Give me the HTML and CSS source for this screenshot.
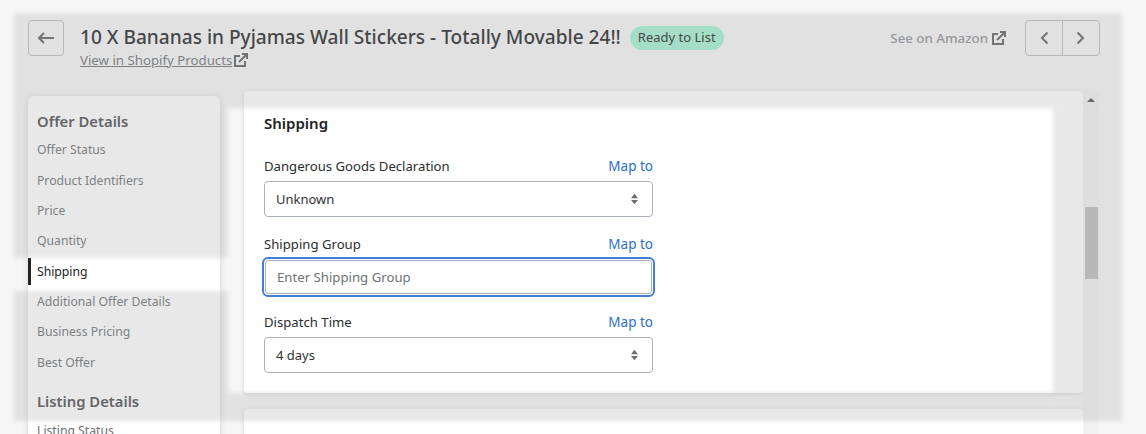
FILE: index.html
```html
<!DOCTYPE html>
<html lang="en">
<head>
<meta charset="utf-8">
<title>Shipping</title>
<link rel="stylesheet" href="styles.css">
</head>
<body>
<div class="page">
  <header class="topbar">
    <button class="btn back" aria-label="Back"><svg viewBox="0 0 20 20" width="20" height="20"><path d="M18 10H3M8 5l-5 5 5 5"/></svg></button>
    <div class="heading">
      <div class="title-row"><h1>10 X Bananas in Pyjamas Wall Stickers - Totally Movable 24!!</h1><span class="badge">Ready to List</span></div>
      <div class="link-row"><a class="shopify">View in Shopify Products</a><svg class="ext" viewBox="0 0 20 20" width="20" height="20"><path d="M11 3h6v6h-2V6.400l-6.300 6.300-1.400-1.400L13.600 5H11zM3 5h6v2H5v8h8v-4h2v6H3z"/></svg></div>
    </div>
    <a class="amazon">See on Amazon<svg class="ext" viewBox="0 0 20 20" width="20" height="20"><path d="M11 3h6v6h-2V6.400l-6.300 6.300-1.400-1.400L13.600 5H11zM3 5h6v2H5v8h8v-4h2v6H3z"/></svg></a>
    <div class="pager">
      <button class="btn" aria-label="Previous"><svg viewBox="0 0 20 20" width="20" height="20"><path d="M13.500 4.500 8 10l5.500 5.500"/></svg></button>
      <button class="btn" aria-label="Next"><svg viewBox="0 0 20 20" width="20" height="20"><path d="M6.500 4.500 12 10l-5.500 5.500"/></svg></button>
    </div>
  </header>
  <div class="body">
    <nav class="side">
      <h2>Offer Details</h2>
      <ul>
        <li>Offer Status</li>
        <li>Product Identifiers</li>
        <li>Price</li>
        <li>Quantity</li>
        <li class="active">Shipping</li>
        <li>Additional Offer Details</li>
        <li>Business Pricing</li>
        <li>Best Offer</li>
      </ul>
      <h2 class="second">Listing Details</h2>
      <ul class="listing"><li>Listing Status</li></ul>
    </nav>
    <main class="content">
      <section class="card">
        <h3>Shipping</h3>
        <div class="field">
          <div class="label-row"><label>Dangerous Goods Declaration</label><a>Map to</a></div>
          <div class="control"><span>Unknown</span><svg class="updown" viewBox="0 0 8 12" width="7" height="12"><path d="M4 0 8 5H0zM4 12 0 7h8z"/></svg></div>
        </div>
        <div class="field">
          <div class="label-row"><label>Shipping Group</label><a>Map to</a></div>
          <div class="control focus"><span>Enter Shipping Group</span></div>
        </div>
        <div class="field">
          <div class="label-row"><label>Dispatch Time</label><a>Map to</a></div>
          <div class="control"><span>4 days</span><svg class="updown" viewBox="0 0 8 12" width="7" height="12"><path d="M4 0 8 5H0zM4 12 0 7h8z"/></svg></div>
        </div>
      </section>
      <section class="card next"></section>
    </main>
    <div class="scrollbar"><i class="up"></i><i class="thumb"></i></div>
  </div>
  <div class="veil v-top"></div>
  <div class="veil v-left1"></div>
  <div class="veil v-left2"></div>
  <div class="veil v-right"></div>
  <div class="veil v-bottom"></div>
</div>
</body>
</html>
```

FILE: styles.css
```css
* { box-sizing: border-box; }
html, body { margin: 0; height: 100%; }
body { background: #f6f6f7; font-family: "Noto Sans", "Open Sans", sans-serif; color: #202223; overflow: hidden; }
.page { position: relative; width: 1146px; height: 434px; overflow: hidden; padding: 20px 46px 0 28px; }

.topbar { display: flex; align-items: flex-start; height: 71px; }
.btn { width: 36px; height: 36px; padding: 0; background: transparent; border: 1px solid #babfc3; border-radius: 4px; display: flex; align-items: center; justify-content: center; }
.btn svg { fill: none; stroke: #5c5f62; stroke-width: 2; }
.heading { margin-left: 16px; flex: 1; }
.title-row { display: flex; align-items: center; height: 29px; margin-top: 3px; }
h1 { margin: 0; font-size: 19.100px; font-weight: 500; line-height: 29px; color: #202223; white-space: nowrap; }
.badge { margin-left: 9px; height: 24px; padding: 0 8px; border-radius: 12px; background: #a4f1d3; font-size: 13px; line-height: 23px; color: #202223; }
.link-row { display: flex; align-items: center; height: 16px; }
.shopify { font-size: 13.250px; line-height: 16px; color: #6d7175; text-decoration: underline; }
.ext { fill: #5c5f62; margin-left: -1px; flex: none; }
.amazon { display: flex; align-items: center; height: 36px; font-size: 13.300px; font-weight: 500; color: #8c9196; margin-right: 16px; }
.amazon .ext { margin-left: 1px; }
.pager { display: flex; }
.pager .btn { width: 38px; }
.pager .btn:first-child { border-radius: 4px 0 0 4px; }
.pager .btn:last-child { margin-left: -1px; border-radius: 0 4px 4px 0; }

.body { display: flex; align-items: flex-start; }
.side { width: 192px; margin-top: 5px; padding: 14px 0 0; background: #fff; border-radius: 6px; box-shadow: 0 1px 6px rgba(0,0,0,.15); height: 400px; flex: none; }
.side h2 { margin: 0; padding-left: 9px; font-size: 14.800px; font-weight: 600; line-height: 22px; color: #4a4c4f; }
.side .second { margin-top: 11.600px; }
.side ul { list-style: none; margin: 3.450px 0 0; padding: 0; }
.side .listing { margin-top: 4.500px; }
.side li { padding-left: 9px; height: 30.330px; line-height: 30px; font-size: 12.200px; color: #6d7175; position: relative; }
.side li.active { color: #202223; }
.side li.active::before { content: ""; position: absolute; left: 0; top: 1px; width: 3px; height: 27px; background: #202223; }

.content { width: 839px; margin-left: 24px; flex: none; }
.card { background: #fff; border-radius: 4px; box-shadow: 0 1px 4px rgba(0,0,0,.15); padding: 20px; height: 302px; }
.card.next { margin-top: 16px; height: 120px; }
h3 { margin: 0 0 21px; font-size: 15px; font-weight: 600; line-height: 24px; color: #202223; }
.field { width: 389px; margin-bottom: 10px; height: 68px; }
.label-row { display: flex; justify-content: space-between; font-size: 13.150px; line-height: 20px; height: 25px; color: #2b2d2e; }
.label-row a { color: #2c6ecb; font-size: 13.500px; }
.control { height: 36px; border: 1px solid #a9afbb; border-radius: 4px; padding: 0 11px; display: flex; align-items: center; justify-content: space-between; font-size: 13px; color: #303234; }
.control.focus { border-color: #fff; box-shadow: inset 0 0 0 1px #a9afbb; outline: 2px solid #3f7fd6; outline-offset: 0; color: #6d7175; padding-left: 12px; font-size: 13.200px; }
.updown { fill: #6b6f75; margin-right: 3px; }

.scrollbar { width: 16px; height: 343px; background: #f1f1f1; flex: none; position: relative; display: flex; flex-direction: column; align-items: center; }
.up { width: 0; height: 0; margin-top: 7px; border: 4px solid transparent; border-top: 0; border-bottom: 4px solid #505050; }
.thumb { position: absolute; left: 2px; top: 116px; width: 13px; height: 72px; background: #bebebe; }

.veil { position: absolute; background: rgba(170,170,170,.27); filter: blur(2px); pointer-events: none; }
.v-top { left: 14px; top: 13px; width: 1108px; height: 95px; }
.v-left1 { left: 14px; top: 108px; width: 214px; height: 150px; }
.v-left2 { left: 14px; top: 291px; width: 214px; height: 130px; }
.v-right { left: 1053px; top: 108px; width: 69px; height: 313px; }
.v-bottom { left: 228px; top: 393px; width: 825px; height: 28px; }
```
